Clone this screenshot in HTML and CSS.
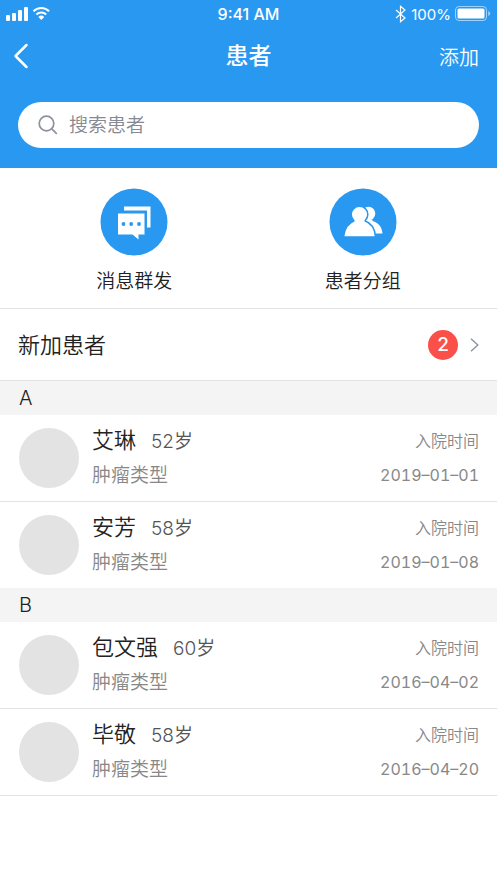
FILE: index.html
```html
<!DOCTYPE html>
<html lang="zh-CN">
<head>
<meta charset="utf-8">
<meta name="viewport" content="width=device-width, initial-scale=1">
<title>患者</title>
<link rel="stylesheet" href="styles.css">
</head>
<body>
<header class="header">
  <div class="status">
    <div class="status-side">
      <svg width="46" height="16" viewBox="0 0 46 16" fill="#fff" aria-hidden="true">
        <rect x="0" y="9" width="4" height="6" rx="1"/>
        <rect x="6" y="7" width="4" height="8" rx="1"/>
        <rect x="12" y="4" width="4" height="11" rx="1"/>
        <rect x="18" y="1" width="4" height="14" rx="1"/>
        <g fill="none" stroke="#fff" stroke-width="2">
          <path d="M27.500 5.200a11 11 0 0 1 15.600 0"/>
          <path d="M30.400 8.500a7 7 0 0 1 9.800 0"/>
        </g>
        <path d="M32.400 11a4.200 4.200 0 0 1 5.800 0L35.300 14z"/>
      </svg>
    </div>
    <span class="clock">9:41 AM</span>
    <div class="status-side status-end">
      <svg width="12" height="18" viewBox="0 0 12 18" fill="none" stroke="#fff" stroke-width="1.200" aria-hidden="true">
        <path d="M1 5l9 8-4.500 3.800V1.200L10 5 1 13"/>
      </svg>
      <span>100%</span>
      <svg width="36" height="16" viewBox="0 0 36 16" aria-hidden="true">
        <rect x="0.500" y="0.500" width="31" height="14" rx="3.500" fill="none" stroke="#fff" stroke-opacity=".55"/>
        <rect x="2.500" y="2.500" width="27" height="10" rx="1.500" fill="#fff"/>
        <path d="M33.200 5v5q2-.8 2-2.500t-2-2.500z" fill="#fff" fill-opacity=".55"/>
      </svg>
    </div>
  </div>
  <nav class="nav">
    <button class="nav-back" type="button" aria-label="返回">
      <svg width="26" height="26" viewBox="0 0 26 26" fill="none" stroke="#fff" stroke-width="2.500" stroke-linecap="round" stroke-linejoin="round"><path d="M13.500 2L2.500 13l11 11" transform="translate(-5)"/></svg>
    </button>
    <h1 class="title">患者</h1>
    <button class="nav-add" type="button">添加</button>
  </nav>
  <label class="search">
    <svg width="20" height="20" viewBox="0 0 20 20" fill="none" stroke="#8e929c" stroke-width="1.700" aria-hidden="true"><circle cx="8.500" cy="8.500" r="7.300"/><path d="M13.800 13.800l5 5"/></svg>
    <input type="search" placeholder="搜索患者" aria-label="搜索患者">
  </label>
</header>
<main>
  <div class="actions">
    <button class="action" type="button">
      <svg width="68" height="68" viewBox="0 0 68 68" aria-hidden="true">
        <circle cx="34" cy="34" r="33.500" fill="#2998f0"/>
        <path d="M24 18.500h26.500V39.500H47V22.500H24z" fill="#fff"/>
        <path d="M18 25.500h26.500v21H38.500v5L32.500 46.500H18z" fill="#fff"/>
        <g fill="#2998f0"><circle cx="23.500" cy="36" r="1.900"/><circle cx="31.200" cy="36" r="1.900"/><circle cx="39" cy="36" r="1.900"/></g>
      </svg>
      <span>消息群发</span>
    </button>
    <button class="action" type="button">
      <svg width="68" height="68" viewBox="0 0 68 68" aria-hidden="true">
        <circle cx="34" cy="34" r="33.500" fill="#2998f0"/>
        <g fill="#fff">
          <circle cx="39.500" cy="25.500" r="6.800"/>
          <path d="M36 31.500h7.500V33C49.500 34.500 53 39 53.500 45.500H40z"/>
        </g>
        <g fill="#fff" stroke="#2998f0" stroke-width="1.500">
          <circle cx="30.500" cy="26.500" r="8.300"/>
          <path d="M14.500 49C15.500 40 20 34.500 26 32.500q4.500 2.500 9 0C41.500 34.500 46 40 46.500 49z"/>
        </g>
        <path d="M25.500 31h10v4h-10z" fill="#fff"/>
      </svg>
      <span>患者分组</span>
    </button>
  </div>
  <a class="new-patients" href="#new">
    <span>新加患者</span>
    <span class="badge">2</span>
    <svg width="9" height="14" viewBox="0 0 9 14" fill="none" stroke="#8e929c" stroke-width="1.400" aria-hidden="true"><path d="M1 .8L7.800 7 1 13.200"/></svg>
  </a>
  <section>
    <h2 class="letter">A</h2>
    <ul class="patients">
      <li class="patient">
        <span class="avatar"></span>
        <div class="info"><div class="who"><span class="name">艾琳</span><span class="age">52岁</span></div><div class="kind">肿瘤类型</div></div>
        <div class="admitted"><span>入院时间</span><time datetime="2019-01-01">2019–01–01</time></div>
      </li>
      <li class="patient">
        <span class="avatar"></span>
        <div class="info"><div class="who"><span class="name">安芳</span><span class="age">58岁</span></div><div class="kind">肿瘤类型</div></div>
        <div class="admitted"><span>入院时间</span><time datetime="2019-01-08">2019–01–08</time></div>
      </li>
    </ul>
  </section>
  <section>
    <h2 class="letter">B</h2>
    <ul class="patients patients-last">
      <li class="patient">
        <span class="avatar"></span>
        <div class="info"><div class="who"><span class="name">包文强</span><span class="age">60岁</span></div><div class="kind">肿瘤类型</div></div>
        <div class="admitted"><span>入院时间</span><time datetime="2016-04-02">2016–04–02</time></div>
      </li>
      <li class="patient">
        <span class="avatar"></span>
        <div class="info"><div class="who"><span class="name">毕敬</span><span class="age">58岁</span></div><div class="kind">肿瘤类型</div></div>
        <div class="admitted"><span>入院时间</span><time datetime="2016-04-20">2016–04–20</time></div>
      </li>
    </ul>
  </section>
</main>
</body>
</html>
```
FILE: styles.css
```css
* { box-sizing: border-box; }
body {
  margin: 0;
  background: #fff;
  color: #222;
  font-family: Inter, "Noto Sans CJK SC", sans-serif;
  font-size: 19px;
  font-weight: 350;
}
button, input { font: inherit; color: inherit; border: 0; background: none; padding: 0; }
svg { display: block; flex: none; overflow: visible; }
h1, h2, ul { margin: 0; padding: 0; }

.header { background: #2998f0; color: #fff; padding-bottom: 20px; }
.status {
  display: flex;
  align-items: center;
  height: 28px;
  padding: 0 6px;
  font-size: 15px;
  font-weight: 400;
}
.status-side { flex: 1; display: flex; align-items: center; gap: 4px; }
.status-end { justify-content: flex-end; }
.clock { font-size: 16px; font-weight: 500; }

.nav {
  display: grid;
  grid-template-columns: 1fr auto 1fr;
  align-items: center;
  height: 56px;
  padding: 0 18px;
}
.nav-back { justify-self: start; }
.nav-add { justify-self: end; font-size: 20px; }
.title { font-size: 23px; font-weight: 500; line-height: 32px; }

.search {
  display: flex;
  align-items: center;
  gap: 11px;
  height: 46px;
  margin: 18px 18px 0;
  padding: 0 20px;
  border-radius: 23px;
  background: #fff;
  color: #222;
}
.search input { flex: 1; min-width: 0; outline: 0; appearance: none; }
.search input::placeholder { color: #858993; opacity: 1; }

.actions {
  display: flex;
  justify-content: space-around;
  padding: 20px 20px 12px;
  border-bottom: 1px solid #e3e3e3;
}
.action {
  flex: 1;
  display: flex;
  flex-direction: column;
  align-items: center;
  gap: 12px;
  line-height: 28px;
}

.new-patients {
  display: flex;
  align-items: center;
  height: 72px;
  padding: 0 18px;
  border-bottom: 1px solid #e3e3e3;
  color: inherit;
  font-size: 22px;
  line-height: 30px;
  text-decoration: none;
}
.badge {
  width: 30px;
  height: 30px;
  margin: 0 12px 0 auto;
  border-radius: 50%;
  background: #fb5049;
  color: #fff;
  font-size: 19px;
  font-weight: 500;
  text-align: center;
}

.letter {
  padding: 0 19px;
  background: #f4f4f4;
  font-size: 20px;
  font-weight: 350;
  line-height: 34px;
}
.patients { list-style: none; }
.patient {
  display: flex;
  align-items: center;
  gap: 13px;
  height: 86px;
  padding: 0 18px 0 19px;
}
.patient + .patient { border-top: 1px solid #e3e3e3; height: 87px; }
.patients-last { border-bottom: 1px solid #e3e3e3; }
.avatar { width: 60px; height: 60px; border-radius: 50%; background: #e3e3e3; }
.info { flex: 1; line-height: 34px; }
.who { display: flex; align-items: baseline; gap: 15px; }
.name { font-size: 22px; }
.age { color: #555; font-size: 19px; }
.kind { color: #888; }
.admitted {
  display: flex;
  flex-direction: column;
  align-items: flex-end;
  color: #888;
  font-size: 16px;
  line-height: 34px;
  font-variant-numeric: tabular-nums;
}
.admitted time { font-weight: 400; }
```
